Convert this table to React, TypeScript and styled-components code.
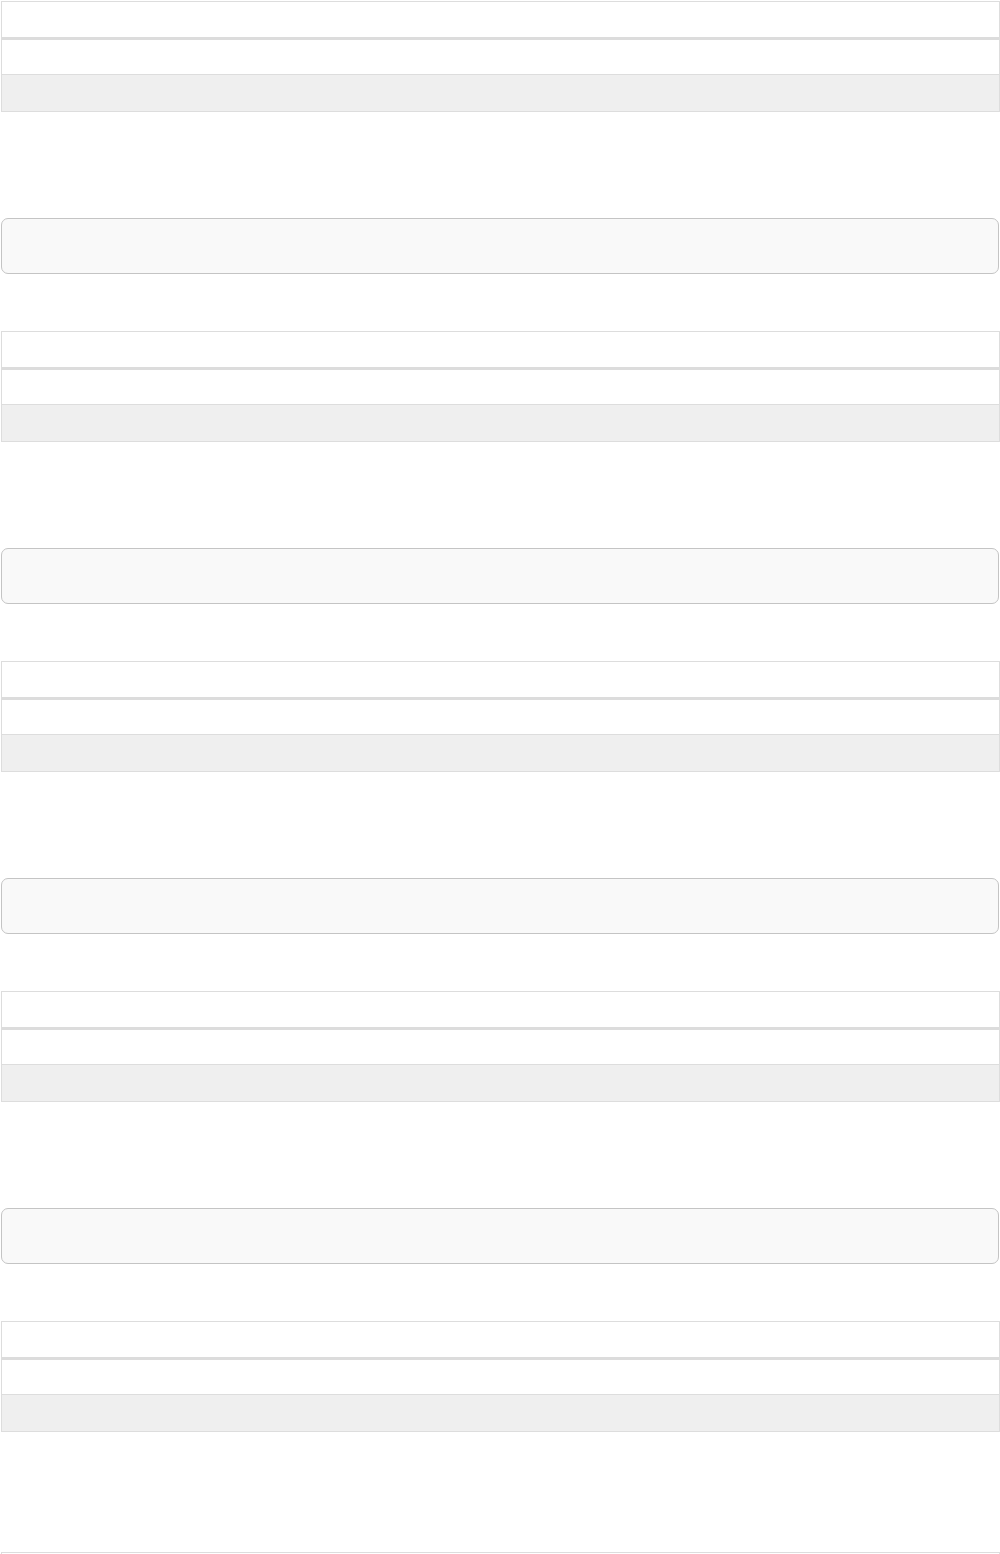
import React from "react";
import styled, { createGlobalStyle } from "styled-components";

const GlobalStyle = createGlobalStyle`
  html, body {
    margin: 0;
    padding: 0;
    background: #ffffff;
  }
  body {
    font-family: "Liberation Sans", Arial, sans-serif;
    font-size: 14px;
    color: #333333;
  }
`;

type Block = {
  id: number;
  withCode: boolean;
};

const blocks: Block[] = [
  { id: 1, withCode: true },
  { id: 2, withCode: true },
  { id: 3, withCode: true },
  { id: 4, withCode: true },
  { id: 5, withCode: false },
  { id: 6, withCode: false },
];

function App() {
  return (
    <>
      <GlobalStyle />
      <Page>
        {blocks.map((b) => (
          <Section key={b.id} $last={!b.withCode}>
            <DataTable>
              <thead>
                <tr>
                  <HeadCell />
                </tr>
              </thead>
              <tbody>
                <tr>
                  <BodyCell />
                </tr>
                <tr>
                  <BodyCell $shaded />
                </tr>
              </tbody>
            </DataTable>
            {b.withCode && <CodeBlock />}
          </Section>
        ))}
      </Page>
    </>
  );
}

const Page = styled.div`
  display: flex;
  flex-direction: column;
  padding: 1px 0 0 1px;
`;

const Section = styled.section<{ $last?: boolean }>`
  display: flex;
  flex-direction: column;
  padding-bottom: ${(p) => (p.$last ? "120px" : "57px")};
`;

const DataTable = styled.table`
  width: 100%;
  border: 1px solid #dddddd;
  border-spacing: 0;
  border-collapse: separate;
`;

const HeadCell = styled.th`
  height: 35px;
  padding: 0;
  border-bottom: 3px solid #dcdcdc;
  background: #ffffff;
`;

const BodyCell = styled.td<{ $shaded?: boolean }>`
  height: ${(p) => (p.$shaded ? "36px" : "34px")};
  padding: 0;
  background: ${(p) => (p.$shaded ? "#efefef" : "#ffffff")};
  border-bottom: ${(p) => (p.$shaded ? "none" : "1px solid #dddddd")};
`;

const CodeBlock = styled.pre`
  margin: 106px 1px 0 0;
  height: 54px;
  box-sizing: content-box;
  padding: 0;
  background: #f9f9f9;
  border: 1px solid #c4c4c4;
  border-radius: 7px;
  font-family: "Liberation Mono", monospace;
`;

export default App;
